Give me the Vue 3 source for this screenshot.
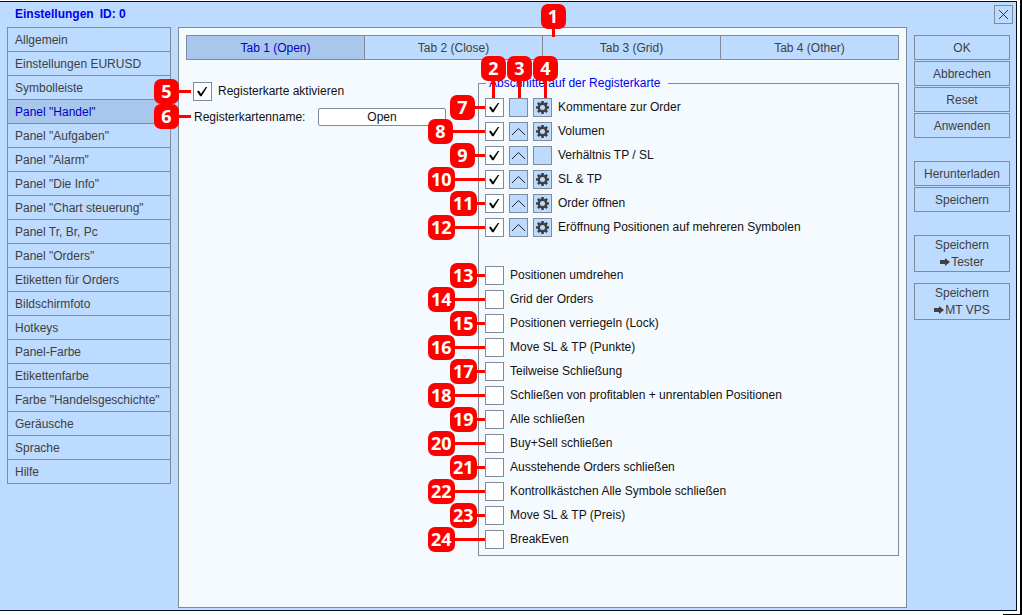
<script setup>
import { ref } from 'vue'

const pages = [
  'Allgemein',
  'Einstellungen EURUSD',
  'Symbolleiste',
  'Panel "Handel"',
  'Panel "Aufgaben"',
  'Panel "Alarm"',
  'Panel "Die Info"',
  'Panel "Chart steuerung"',
  'Panel Tr, Br, Pc',
  'Panel "Orders"',
  'Etiketten für Orders',
  'Bildschirmfoto',
  'Hotkeys',
  'Panel-Farbe',
  'Etikettenfarbe',
  'Farbe "Handelsgeschichte"',
  'Geräusche',
  'Sprache',
  'Hilfe',
]
const activePage = ref(3)

const tabs = ['Tab 1 (Open)', 'Tab 2 (Close)', 'Tab 3 (Grid)', 'Tab 4 (Other)']
const activeTab = ref(0)

const tabEnabled = ref(true)
const tabName = ref('Open')

const visibleSections = ref([
  { no: 7, label: 'Kommentare zur Order', on: true, up: false, gear: true },
  { no: 8, label: 'Volumen', on: true, up: true, gear: true },
  { no: 9, label: 'Verhältnis TP / SL', on: true, up: true, gear: false },
  { no: 10, label: 'SL & TP', on: true, up: true, gear: true },
  { no: 11, label: 'Order öffnen', on: true, up: true, gear: true },
  { no: 12, label: 'Eröffnung Positionen auf mehreren Symbolen', on: true, up: true, gear: true },
])
const hiddenSections = ref([
  { no: 13, label: 'Positionen umdrehen', on: false },
  { no: 14, label: 'Grid der Orders', on: false },
  { no: 15, label: 'Positionen verriegeln (Lock)', on: false },
  { no: 16, label: 'Move SL & TP (Punkte)', on: false },
  { no: 17, label: 'Teilweise Schließung', on: false },
  { no: 18, label: 'Schließen von profitablen + unrentablen Positionen', on: false },
  { no: 19, label: 'Alle schließen', on: false },
  { no: 20, label: 'Buy+Sell schließen', on: false },
  { no: 21, label: 'Ausstehende Orders schließen', on: false },
  { no: 22, label: 'Kontrollkästchen Alle Symbole schließen', on: false },
  { no: 23, label: 'Move SL & TP (Preis)', on: false },
  { no: 24, label: 'BreakEven', on: false },
])

const actionGroups = [
  ['OK', 'Abbrechen', 'Reset', 'Anwenden'],
  ['Herunterladen', 'Speichern'],
]
const exportTargets = ['Tester', 'MT VPS']
const teeth = [0, 45, 90, 135]
</script>

<template>
  <div class="page">
    <div class="window">
      <header class="titlebar">
        <h1><span>Einstellungen</span><span>ID: 0</span></h1>
        <button class="square close" type="button" aria-label="Schließen">
          <svg viewBox="0 0 17 17"><path d="M4 4L13 13M13 4L4 13" fill="none" stroke="#333" /></svg>
        </button>
      </header>

      <div class="body">
        <nav class="sidebar">
          <button
            v-for="(page, i) in pages"
            :key="page"
            type="button"
            :class="{ active: i === activePage }"
            @click="activePage = i"
          >{{ page }}</button>
        </nav>

        <main class="panel">
          <div class="tabs" role="tablist">
            <button
              v-for="(tab, i) in tabs"
              :key="tab"
              type="button"
              role="tab"
              :aria-selected="i === activeTab"
              :class="{ active: i === activeTab }"
              @click="activeTab = i"
            >{{ tab }}</button>
            <span class="pin-down tabs-pin"><b>1</b><i></i></span>
          </div>

          <div class="columns">
            <div class="general">
              <div class="row">
                <span class="pin near-text"><b>5</b><i></i></span>
                <span class="check">
                  <input id="enabled" v-model="tabEnabled" type="checkbox" />
                  <svg viewBox="0 0 19 19"><path d="M4 9.5L5.8 8.5L8 11.8L12.8 5L14.3 5L8.5 14.2L7.2 14.2Z" /></svg>
                </span>
                <label class="text" for="enabled">Registerkarte aktivieren</label>
              </div>
              <div class="row">
                <span class="pin near-text"><b>6</b><i></i></span>
                <label class="name-label" for="name">Registerkartenname:</label>
                <input id="name" v-model="tabName" class="name" type="text" />
              </div>
            </div>

            <fieldset class="sections">
              <legend>Abschnitte auf der Registerkarte</legend>
              <div class="rows">
                <div class="column-pins">
                  <span v-for="n in [2, 3, 4]" :key="n" class="pin-down"><b>{{ n }}</b><i></i></span>
                </div>
                <div v-for="(s, i) in visibleSections" :key="s.no" class="row">
                  <span class="pin" :class="{ far: i % 2 === 1 }"><b>{{ s.no }}</b><i></i></span>
                  <span class="check">
                    <input :id="'s' + s.no" v-model="s.on" type="checkbox" />
                    <svg viewBox="0 0 19 19"><path d="M4 9.5L5.8 8.5L8 11.8L12.8 5L14.3 5L8.5 14.2L7.2 14.2Z" /></svg>
                  </span>
                  <button class="square" type="button" :aria-label="s.label + ' nach oben'">
                    <svg v-if="s.up" viewBox="0 0 17 17"><path d="M2 12L8.5 5.5L15 12" fill="none" stroke="#222" /></svg>
                  </button>
                  <button class="square" type="button" :aria-label="s.label + ' einstellen'">
                    <svg v-if="s.gear" viewBox="0 0 17 17">
                      <g fill="none" stroke="#404040">
                        <circle cx="8.5" cy="8.5" r="3.7" stroke-width="2.4" />
                        <path
                          v-for="a in teeth"
                          :key="a"
                          d="M8.5 2V4.5M8.5 12.5V15"
                          stroke-width="2.6"
                          :transform="`rotate(${a} 8.5 8.5)`"
                        />
                      </g>
                    </svg>
                  </button>
                  <label class="text" :for="'s' + s.no">{{ s.label }}</label>
                </div>
              </div>
              <div class="rows">
                <div v-for="(s, i) in hiddenSections" :key="s.no" class="row">
                  <span class="pin" :class="{ far: i % 2 === 1 }"><b>{{ s.no }}</b><i></i></span>
                  <span class="check">
                    <input :id="'s' + s.no" v-model="s.on" type="checkbox" />
                    <svg viewBox="0 0 19 19"><path d="M4 9.5L5.8 8.5L8 11.8L12.8 5L14.3 5L8.5 14.2L7.2 14.2Z" /></svg>
                  </span>
                  <label class="text" :for="'s' + s.no">{{ s.label }}</label>
                </div>
              </div>
            </fieldset>
          </div>
        </main>

        <aside class="actions">
          <div v-for="(group, g) in actionGroups" :key="g" class="group">
            <button v-for="name in group" :key="name" type="button">{{ name }}</button>
          </div>
          <div class="exports">
            <button v-for="target in exportTargets" :key="target" type="button">
              <span>Speichern</span>
              <span>
                <svg class="arrow" viewBox="0 0 10 8"><path d="M0 2H5V0L10 4L5 8V6H0Z" fill="#404040" /></svg>{{ target }}
              </span>
            </button>
          </div>
        </aside>
      </div>
    </div>
  </div>
</template>

<style>
body {
  margin: 0;
  background: #fff;
}
</style>

<style scoped>
* {
  box-sizing: border-box;
}
.page {
  --line: #7f8b99;
  --sky: #bddbff;
  --picked: #a9c7ec;
  --paper: #f5faff;
  --ink: #404040;
  position: relative;
  display: flex;
  min-height: 100vh;
  padding: 1px 3px 4px 0;
  border-right: 2px solid #000;
  font: 12px/16px "Liberation Sans", Arial, sans-serif;
  color: #111;
}
.page::after {
  content: "";
  position: absolute;
  right: 0;
  bottom: 0;
  width: 17px;
  height: 1px;
  background: #000;
}
.window {
  flex: 1;
  display: flex;
  flex-direction: column;
  border: 1px solid #001020;
  border-left: 0;
  background: var(--sky);
}
button,
input {
  font: inherit;
}
button {
  margin: 0;
  padding: 0;
  border: 1px solid var(--line);
  border-radius: 0;
  background: var(--sky);
  color: var(--ink);
}
button.active {
  background: var(--picked);
  color: #0000c8;
}
.titlebar {
  display: flex;
  justify-content: space-between;
  align-items: flex-start;
  height: 25px;
  padding: 3px 3px 0 15px;
}
h1 {
  display: flex;
  gap: 6px;
  margin: 0;
  font-size: 12px;
  line-height: 18px;
  color: #0000f0;
}
.square {
  flex: none;
  width: 19px;
  height: 19px;
}
.square svg {
  display: block;
  width: 17px;
  height: 17px;
}
.body {
  flex: 1;
  display: grid;
  grid-template-columns: 164px 1fr 96px;
  gap: 7px;
  padding: 0 6px 2px 7px;
}
.sidebar {
  display: flex;
  flex-direction: column;
}
.sidebar button {
  height: 25px;
  padding: 0 0 0 7px;
  text-align: left;
  white-space: nowrap;
}
.sidebar button + button {
  margin-top: -1px;
}
.panel {
  padding: 7px;
  border: 1px solid var(--line);
  background: var(--paper);
}
.tabs {
  position: relative;
  display: flex;
}
.tabs button {
  flex: 1;
  height: 25px;
}
.tabs button + button {
  margin-left: -1px;
}
.columns {
  display: flex;
  align-items: flex-start;
}
.general {
  flex: none;
  display: flex;
  flex-direction: column;
  gap: 6px;
  width: 292px;
  padding: 22px 0 0 7px;
}
.row {
  position: relative;
  display: flex;
  align-items: center;
  gap: 5px;
  min-height: 19px;
}
.text {
  padding: 0 0 1px 1px;
  white-space: nowrap;
}
.name-label {
  width: 120px;
  padding: 1px 0 0 1px;
}
.name {
  width: 128px;
  height: 18px;
  padding: 0;
  border: 1px solid var(--line);
  border-radius: 2px;
  background: #fff;
  color: #111;
  text-align: center;
}
.check {
  position: relative;
  flex: none;
  width: 19px;
  height: 19px;
}
.check input {
  appearance: none;
  display: block;
  width: 19px;
  height: 19px;
  margin: 0;
  border: 1px solid var(--line);
  background: #fff;
}
.check svg {
  position: absolute;
  inset: 0;
  display: none;
  pointer-events: none;
}
.check input:checked + svg {
  display: block;
}
.sections {
  flex: 1;
  min-width: 0;
  margin: 16px 0 0;
  padding: 7px 6px 6px;
  border: 1px solid var(--line);
}
legend {
  margin-left: 1px;
  padding: 0 8px 0 3px;
  line-height: 15px;
  color: #0000f0;
}
.rows {
  position: relative;
  display: flex;
  flex-direction: column;
  gap: 5px;
}
.rows + .rows {
  margin-top: 29px;
}

/* Numbered callouts */
.pin,
.pin-down {
  display: flex;
  align-items: center;
  pointer-events: none;
}
.pin {
  position: absolute;
  z-index: 1;
  top: -3px;
  right: 100%;
  width: 35px;
}
.pin.far {
  width: 57px;
}
.pin.near-text {
  width: 39px;
  padding-right: 2px;
}
.pin-down {
  flex-direction: column;
  z-index: 1;
}
.tabs-pin {
  position: absolute;
  left: 50%;
  bottom: 23px;
  height: 33px;
  margin-left: -2px;
}
.column-pins {
  position: absolute;
  z-index: 1;
  left: -4px;
  bottom: 100%;
  display: flex;
  gap: 1px;
  height: 42px;
}
b {
  min-width: 25px;
  height: 25px;
  padding: 0 3px;
  border-radius: 7px;
  background: #f00;
  color: #fff;
  font: bold 18px/25px "Open Sans", "Noto Sans", sans-serif;
  text-align: center;
}
i {
  flex: 1;
  background: #f00;
}
.pin i {
  height: 3px;
}
.pin-down i {
  width: 3px;
}

.actions {
  display: flex;
  flex-direction: column;
  gap: 23px;
  padding-top: 8px;
}
.group {
  display: flex;
  flex-direction: column;
  gap: 1px;
}
.group button {
  height: 25px;
}
.exports {
  display: flex;
  flex-direction: column;
  gap: 11px;
}
.exports button {
  height: 37px;
}
.exports span {
  display: block;
  line-height: 17px;
}
.arrow {
  width: 10px;
  height: 8px;
  margin-right: 1px;
}
</style>
